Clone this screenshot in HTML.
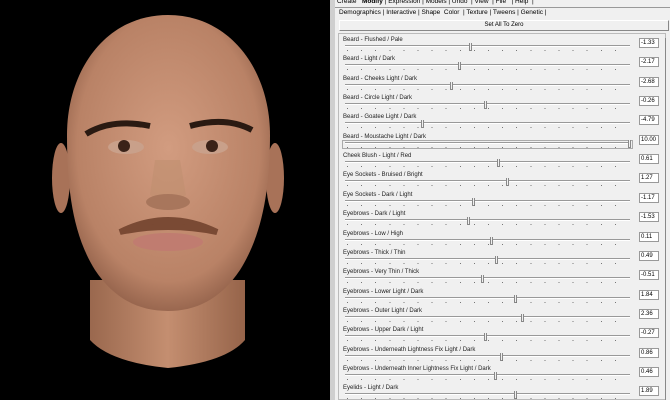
<!DOCTYPE html>
<html><head><meta charset="utf-8"><style>
*{margin:0;padding:0;box-sizing:border-box}
body{width:670px;height:400px;overflow:hidden;background:#000;font-family:"Liberation Sans",sans-serif;position:relative}
#panel{position:absolute;left:335px;top:0;width:335px;height:400px;background:#f0f0f0}
.t{position:absolute;font-size:6.5px;color:#000;white-space:nowrap}
.lbl{position:absolute;left:8px;font-size:6px;color:#222;white-space:nowrap}
.trk{position:absolute;left:10px;width:285px;height:2px;border-top:1px solid #999;border-bottom:1px solid #fff}
.th{position:absolute;width:3px;height:8px;border:1px solid #888;border-top:none;background:#f0f0f0}
.dots{position:absolute;left:12px;width:282px;height:1px;background:repeating-linear-gradient(90deg,#777 0 1px,transparent 1px 14.1px)}
.val{position:absolute;left:304px;width:20px;height:10px;border:1px solid #999;background:#fff;font-size:6px;padding-left:1px;line-height:8px}
</style></head><body>
<svg width="335" height="400" style="position:absolute;left:0;top:0">
<defs>
<radialGradient id="sk" cx="50%" cy="45%" r="60%"><stop offset="0" stop-color="#d29c80"/><stop offset="0.75" stop-color="#b98266"/><stop offset="1" stop-color="#8a5a44"/></radialGradient>
<linearGradient id="nk" x1="0" x2="1"><stop offset="0" stop-color="#9a684e"/><stop offset="0.5" stop-color="#c48e70"/><stop offset="1" stop-color="#96644a"/></linearGradient>
</defs>
<rect width="335" height="400" fill="#000"/>
<path d="M90 280 L90 340 Q110 362 168 368 Q226 362 245 340 L245 280 Z" fill="url(#nk)"/>
<ellipse cx="61" cy="178" rx="9" ry="35" fill="#a87258"/>
<ellipse cx="275" cy="178" rx="9" ry="35" fill="#a87258"/>
<path d="M168 15 C230 15 270 70 270 135 C270 190 262 235 240 270 C220 300 195 311 168 311 C140 311 115 300 95 270 C73 235 67 190 67 135 C67 70 106 15 168 15 Z" fill="url(#sk)"/>
<path d="M86 134 Q112 118 150 126" stroke="#2a1a12" stroke-width="6" fill="none"/>
<path d="M190 126 Q226 116 252 130" stroke="#2a1a12" stroke-width="6" fill="none"/>
<ellipse cx="126" cy="147" rx="18" ry="7" fill="#c9a08a"/>
<ellipse cx="210" cy="147" rx="18" ry="7" fill="#c9a08a"/>
<circle cx="124" cy="146" r="6" fill="#3a2218"/>
<circle cx="212" cy="146" r="6" fill="#3a2218"/>
<path d="M155 160 L150 195 Q168 208 186 195 L180 160 Z" fill="#c09070" opacity="0.6"/>
<ellipse cx="168" cy="202" rx="22" ry="8" fill="#a8765c"/>
<path d="M120 232 Q168 208 217 232 Q168 222 120 232 Z" fill="#7a4a34" stroke="#7a4a34" stroke-width="6"/>
<ellipse cx="168" cy="242" rx="35" ry="9" fill="#c07c70"/>
<rect x="330" y="0" width="5" height="400" fill="#cfcfcf"/>
</svg>
<div id="panel">
<div class="t" style="left:2px;top:-2px">Create &nbsp; <b>Modify</b> | Expression | Models | Undo &nbsp;| View &nbsp;| File &nbsp; | Help &nbsp;|</div>
<div style="position:absolute;left:0;top:7px;width:335px;height:1px;background:#999"></div>
<div class="t" style="left:4px;top:9px">Demographics | Interactive | Shape &nbsp;Color &nbsp;| Texture | Tweens | Genetic |</div>
<div style="position:absolute;left:4px;top:20px;width:330px;height:11px;border:1px solid #888;border-left-color:#fff;border-top-color:#fff;font-size:6px;text-align:center;line-height:9px">Set All To Zero</div>
<div style="position:absolute;left:3px;top:33px;width:328px;height:367px;border:1px solid #bbb"></div>
<div style="position:absolute;left:330px;top:38px;width:1px;height:362px;background:#888"></div>
<div id="rows"></div>
</div>
<script>
var d=[["Beard - Flushed / Pale",-1.33],["Beard - Light / Dark",-2.17],["Beard - Cheeks Light / Dark",-2.68],["Beard - Circle Light / Dark",-0.26],["Beard - Goatee Light / Dark",-4.79],["Beard - Moustache Light / Dark",10],["Cheek Blush - Light / Red",0.61],["Eye Sockets - Bruised / Bright",1.27],["Eye Sockets - Dark / Light",-1.17],["Eyebrows - Dark / Light",-1.53],["Eyebrows - Low / High",0.11],["Eyebrows - Thick / Thin",0.49],["Eyebrows - Very Thin / Thick",-0.51],["Eyebrows - Lower Light / Dark",1.84],["Eyebrows - Outer Light / Dark",2.36],["Eyebrows - Upper Dark / Light",-0.27],["Eyebrows - Underneath Lightness Fix Light / Dark",0.86],["Eyebrows - Underneath Inner Lightness Fix Light / Dark",0.46],["Eyelids - Light / Dark",1.89]];
var h="";
d.forEach(function(r,i){var y=37+i*19.35;var tx=153+r[1]*14;
if(r[1]==10){h+='<div style="position:absolute;left:7px;top:'+(y+6)+'px;width:291px;height:9px;border:1px solid #aaa"></div>';}
h+='<div class="lbl" style="top:'+y+'px">'+r[0]+'</div>';
h+='<div class="trk" style="top:'+(y+8)+'px"></div>';
h+='<div class="th" style="left:'+tx+'px;top:'+(y+6)+'px"></div>';
h+='<div class="dots" style="top:'+(y+13)+'px"></div>';
h+='<div class="val" style="top:'+(y+1)+'px">'+r[1].toFixed(2)+'</div>';});
document.getElementById("rows").innerHTML=h;
</script>
</body></html>
